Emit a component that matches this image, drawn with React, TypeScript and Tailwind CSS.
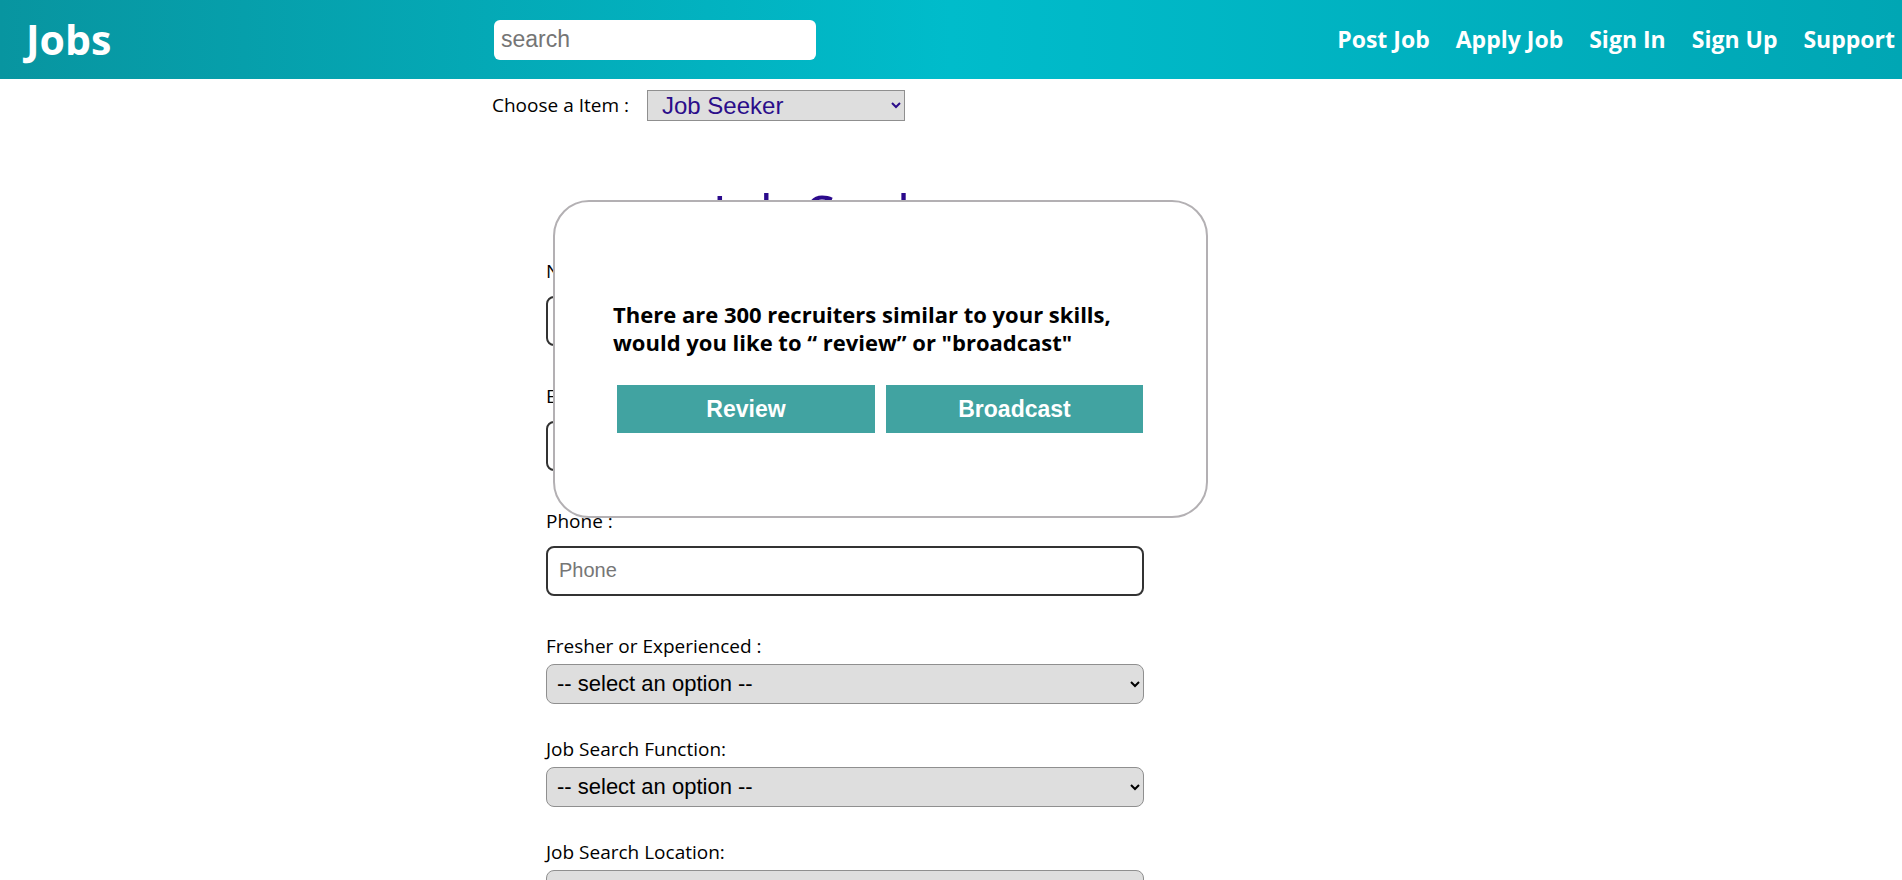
import { useState } from "react";

const navLinks = ["Post Job", "Apply Job", "Sign In", "Sign Up", "Support"];

function TextField({ label, placeholder, first }: { label: string; placeholder: string; first?: boolean }) {
  return (
    <div className={first ? "mt-[12px]" : "mt-[38px]"}>
      <label className="block text-[19px] leading-[24px]">{label}</label>
      <input
        placeholder={placeholder}
        className="mt-[13px] h-[50px] w-full rounded-[8px] border-2 border-[#333] bg-white px-[11px] font-['Liberation_Sans',sans-serif] text-[20px] outline-none placeholder:text-[#767676]"
      />
    </div>
  );
}

function SelectField({ label, first }: { label: string; first?: boolean }) {
  return (
    <div className={first ? "mt-[38px]" : "mt-[33px]"}>
      <label className="block text-[19px] leading-[24px]">{label}</label>
      <select
        defaultValue=""
        className="mt-[6px] h-[40px] w-full rounded-[8px] border border-[#8f8f8f] bg-[#dedede] px-[6px] font-['Liberation_Sans',sans-serif] text-[22px] text-black"
      >
        <option value="" disabled>
          -- select an option --
        </option>
      </select>
    </div>
  );
}

export default function App() {
  const [item, setItem] = useState("seeker");

  return (
    <div className="relative min-h-screen bg-white font-['Open_Sans',sans-serif] text-black">
      <header className="flex h-[79px] items-center bg-[linear-gradient(to_right,#0895a0,#00bccb_50%,#00a6b4)] pl-[26px] pr-[7px] text-white">
        <a href="#" className="w-[468px] text-[41px] font-bold leading-none">
          Jobs
        </a>
        <input
          placeholder="search"
          className="h-[40px] w-[322px] rounded-[6px] bg-white px-[7px] font-['Liberation_Sans',sans-serif] text-[23px] text-black outline-none placeholder:text-[#757575]"
        />
        <nav className="ml-auto flex gap-[26px] text-[23px] font-bold">
          {navLinks.map((l) => (
            <a key={l} href="#">
              {l}
            </a>
          ))}
        </nav>
      </header>

      <main className="pl-[492px] pb-10">
        <div className="mt-[11px] flex items-center">
          <span className="w-[155px] text-[19px]">Choose a Item :</span>
          <select
            value={item}
            onChange={(e) => setItem(e.target.value)}
            className="h-[31px] w-[258px] border border-[#8f8f8f] bg-[#dedede] px-[10px] font-['Liberation_Sans',sans-serif] text-[24px] leading-none text-[#2b0d8a]"
          >
            <option value="seeker">Job Seeker</option>
            <option value="recruiter">Recruiter</option>
          </select>
        </div>

        <div className="ml-[54px] w-[598px]">
          <h2 className="mt-[61px] text-center text-[54px] leading-[1.2] text-[#2b0a8c]">Job Seeker</h2>
          <TextField label="Name :" placeholder="Name" first />
          <TextField label="Email :" placeholder="Email" />
          <TextField label="Phone :" placeholder="Phone" />
          <SelectField label="Fresher or Experienced :" first />
          <SelectField label="Job Search Function:" />
          <SelectField label="Job Search Location:" />
        </div>
      </main>

      <div className="absolute left-[553px] top-[200px] h-[318px] w-[655px] rounded-[36px] border-2 border-[#b3b0b3] bg-white pl-[58px] pt-[98px]">
        <p className="text-[22px] font-bold leading-[28px]">
          There are 300 recruiters similar to your skills,
          <br />
          would you like to “ review” or "broadcast"
        </p>
        <div className="ml-[4px] mt-[29px] flex gap-[11px]">
          <button className="h-[48px] w-[258px] bg-[#41a3a1] font-['Liberation_Sans',sans-serif] text-[23px] font-bold text-white">
            Review
          </button>
          <button className="h-[48px] w-[257px] bg-[#41a3a1] font-['Liberation_Sans',sans-serif] text-[23px] font-bold text-white">
            Broadcast
          </button>
        </div>
      </div>
    </div>
  );
}
